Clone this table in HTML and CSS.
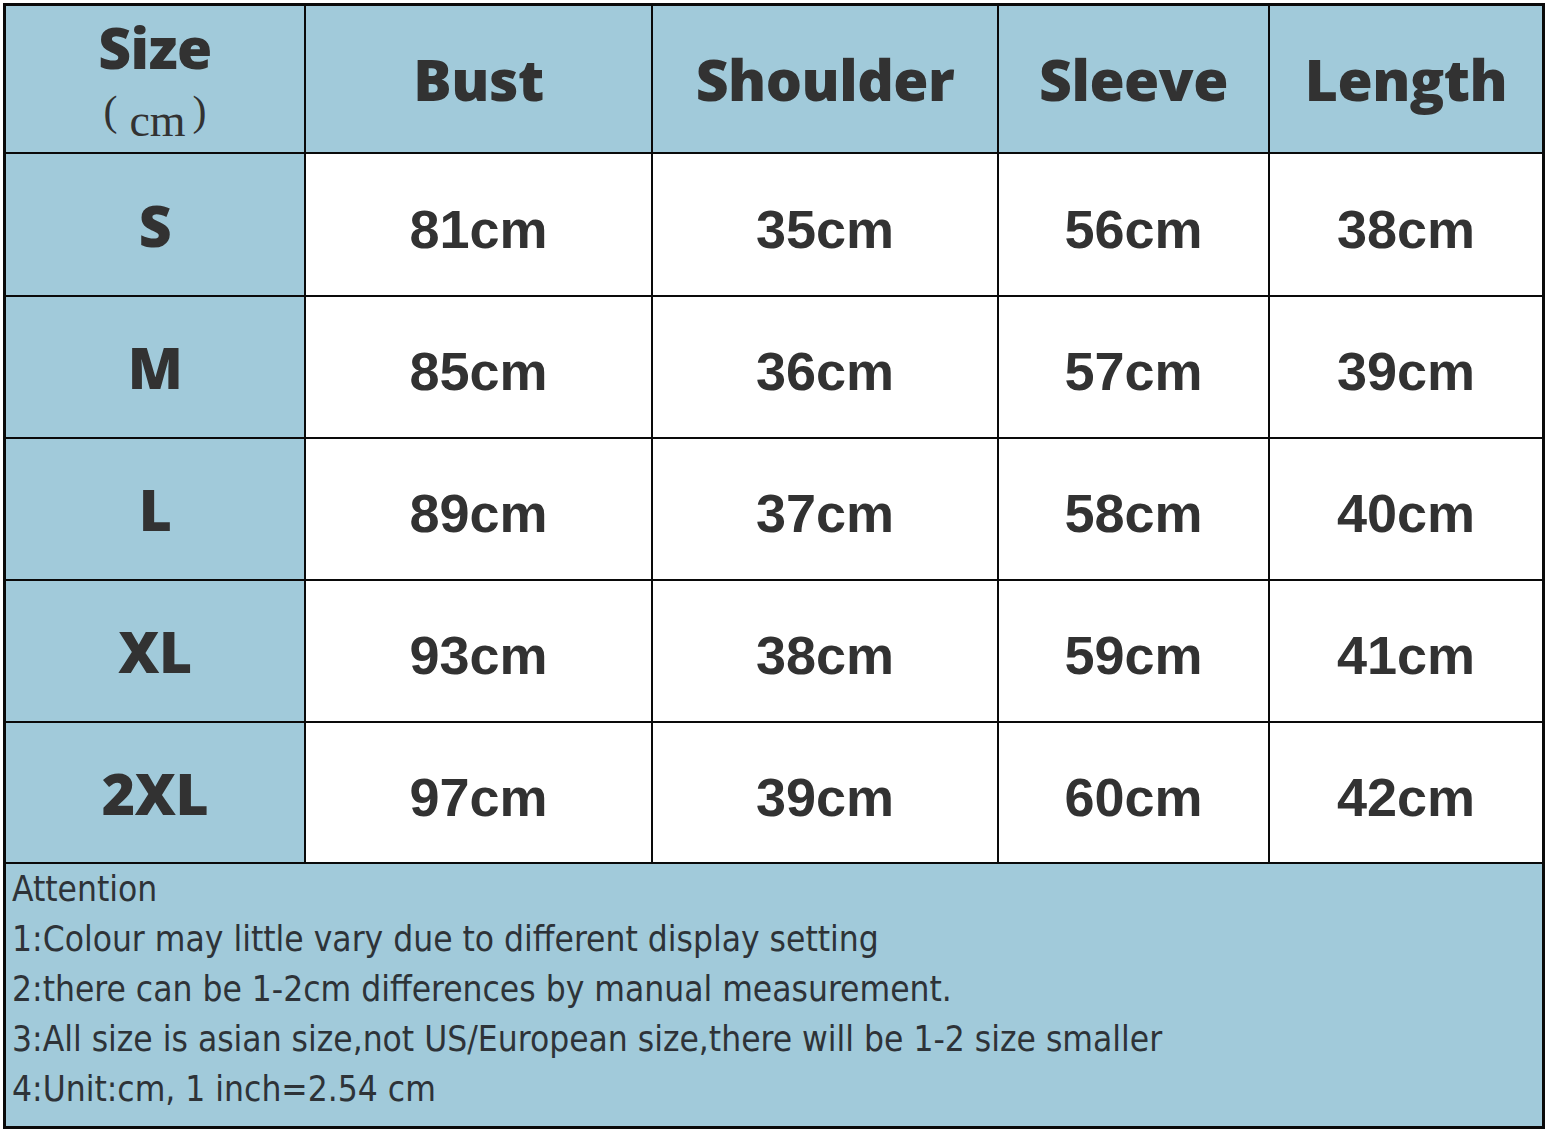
FILE: index.html
```html
<!DOCTYPE html>
<html>
<head>
<meta charset="utf-8">
<link rel="stylesheet" href="styles.css">
</head>
<body>
<div class="page">
  <div class="chart">
    <div class="cell head first"><span class="size-word">Size</span><span class="unit"><span class="paren lp">(</span>cm<span class="paren rp">)</span></span></div>
    <div class="cell head">Bust</div>
    <div class="cell head">Shoulder</div>
    <div class="cell head">Sleeve</div>
    <div class="cell head">Length</div>

    <div class="cell label">S</div>
    <div class="cell val">81cm</div>
    <div class="cell val">35cm</div>
    <div class="cell val">56cm</div>
    <div class="cell val">38cm</div>

    <div class="cell label">M</div>
    <div class="cell val">85cm</div>
    <div class="cell val">36cm</div>
    <div class="cell val">57cm</div>
    <div class="cell val">39cm</div>

    <div class="cell label">L</div>
    <div class="cell val">89cm</div>
    <div class="cell val">37cm</div>
    <div class="cell val">58cm</div>
    <div class="cell val">40cm</div>

    <div class="cell label">XL</div>
    <div class="cell val">93cm</div>
    <div class="cell val">38cm</div>
    <div class="cell val">59cm</div>
    <div class="cell val">41cm</div>

    <div class="cell label">2XL</div>
    <div class="cell val">97cm</div>
    <div class="cell val">39cm</div>
    <div class="cell val">60cm</div>
    <div class="cell val">42cm</div>

    <div class="notes">
      <p>Attention</p>
      <p>1:Colour may little vary due to different display setting</p>
      <p>2:there can be 1-2cm differences by manual measurement.</p>
      <p>3:All size is asian size,not US/European size,there will be 1-2 size smaller</p>
      <p>4:Unit:cm, 1 inch=2.54 cm</p>
    </div>
  </div>
</div>
</body>
</html>
```
FILE: styles.css
```css
html, body {
  margin: 0;
  padding: 0;
  background: #ffffff;
}

.page {
  width: 1550px;
  height: 1132px;
  padding: 3px 5px 3px 3px;
  box-sizing: border-box;
}

.chart {
  display: grid;
  grid-template-columns: 298px 345px 344px 269px 272px;
  grid-template-rows: 146px 141px 140px 140px 140px 139px 262px;
  gap: 2px;
  background: #0a0a0a;
  border: 3px solid #0a0a0a;
  width: 1542px;
  box-sizing: border-box;
}

.cell {
  display: flex;
  align-items: center;
  justify-content: center;
  color: #323232;
  background: #ffffff;
}

.head, .label {
  background: #a1cada;
  font-family: "Open Sans", "DejaVu Sans", sans-serif;
  font-weight: 800;
  font-size: 57px;
  letter-spacing: -0.5px;
}

.head.first {
  flex-direction: column;
  line-height: 68px;
  padding-top: 6px;
  box-sizing: border-box;
}

.size-word {
  display: block;
}

.unit {
  display: block;
  font-family: "Liberation Serif", serif;
  font-weight: 400;
  font-size: 46px;
  line-height: 60px;
  letter-spacing: 0;
}

.paren {
  font-family: "Liberation Serif", serif;
  font-weight: 400;
  font-size: 42px;
  vertical-align: 11px;
}

.lp {
  margin-right: 12px;
}

.rp {
  margin-left: 7px;
}

.val {
  font-family: "Liberation Sans", Arial, sans-serif;
  font-weight: 700;
  font-size: 54px;
  padding-top: 8px;
  box-sizing: border-box;
}

.notes {
  grid-column: 1 / -1;
  background: #a1cada;
  color: #2e3338;
  font-family: "DejaVu Sans Condensed", "DejaVu Sans", sans-serif;
  font-stretch: condensed;
  font-size: 35px;
  line-height: 50px;
  padding: 0 0 0 6px;
}

.notes p {
  margin: 0;
  white-space: nowrap;
}
```
